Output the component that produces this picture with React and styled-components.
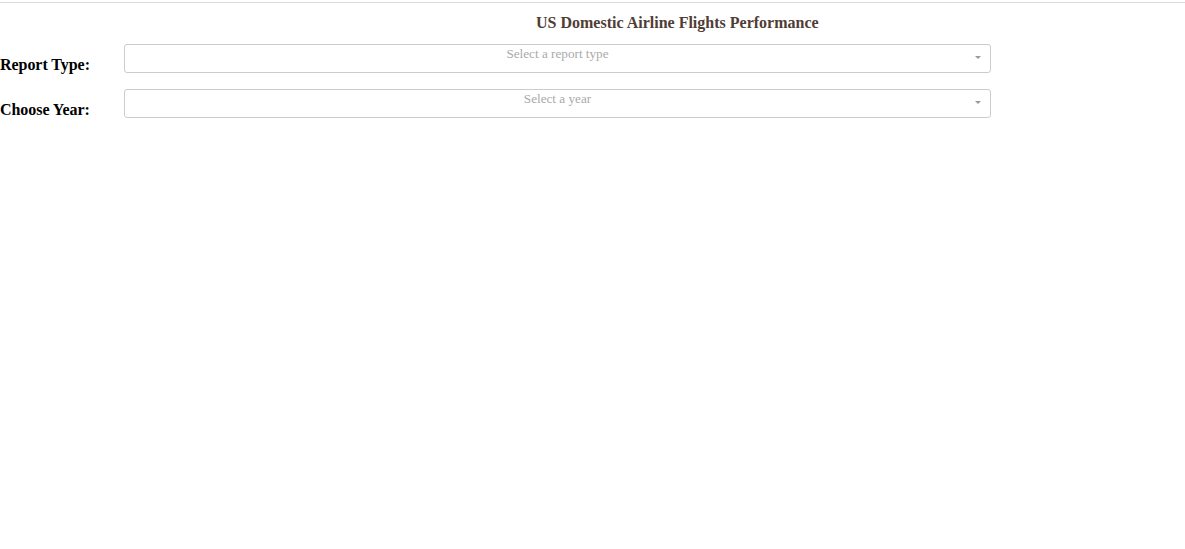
import styled, { createGlobalStyle } from 'styled-components';

const GlobalStyle = createGlobalStyle`
  body {
    margin: 0;
    background: #fff;
    font-family: "Liberation Serif", "Times New Roman", serif;
  }
`;

const Page = styled.div`
  width: 1185px;
  border-top: 1px solid #dcdcdc;
  margin-top: 2px;
`;

const Title = styled.h1`
  margin: 0;
  padding: 11px 0 0 536px;
  height: 29px;
  box-sizing: border-box;
  font-size: 16px;
  font-weight: bold;
  color: #503d36;
  line-height: 17px;
  white-space: nowrap;
`;

const Form = styled.div`
  display: flex;
  flex-direction: column;
  gap: 16px;
  margin-top: 12px;
`;

const Row = styled.div`
  display: flex;
  align-items: flex-end;
`;

const Label = styled.h2`
  margin: 0 0 -1px;
  width: 124px;
  font-size: 16px;
  font-weight: bold;
  color: #000;
  line-height: 18px;
  letter-spacing: -0.05px;
`;

const SelectBox = styled.div`
  position: relative;
  width: 867px;
  height: 29px;
  box-sizing: border-box;
  border: 1px solid #ccc;
  border-radius: 3px;
  background: #fff;
  text-align: center;
`;

const Placeholder = styled.span`
  display: block;
  padding-top: 1px;
  font-size: 13.2px;
  line-height: 15px;
  color: #aaa;
`;

const Arrow = styled.span`
  position: absolute;
  right: 9px;
  top: 11px;
  width: 0;
  height: 0;
  border-style: solid;
  border-width: 3px 3.5px 1px;
  border-color: #999 transparent transparent;
`;

function Dropdown({ placeholder }) {
  return (
    <SelectBox>
      <Placeholder>{placeholder}</Placeholder>
      <Arrow />
    </SelectBox>
  );
}

export default function App() {
  return (
    <>
      <GlobalStyle />
      <Page>
        <Title>US Domestic Airline Flights Performance</Title>
        <Form>
          <Row>
            <Label>Report Type:</Label>
            <Dropdown placeholder="Select a report type" />
          </Row>
          <Row>
            <Label>Choose Year:</Label>
            <Dropdown placeholder="Select a year" />
          </Row>
        </Form>
      </Page>
    </>
  );
}
